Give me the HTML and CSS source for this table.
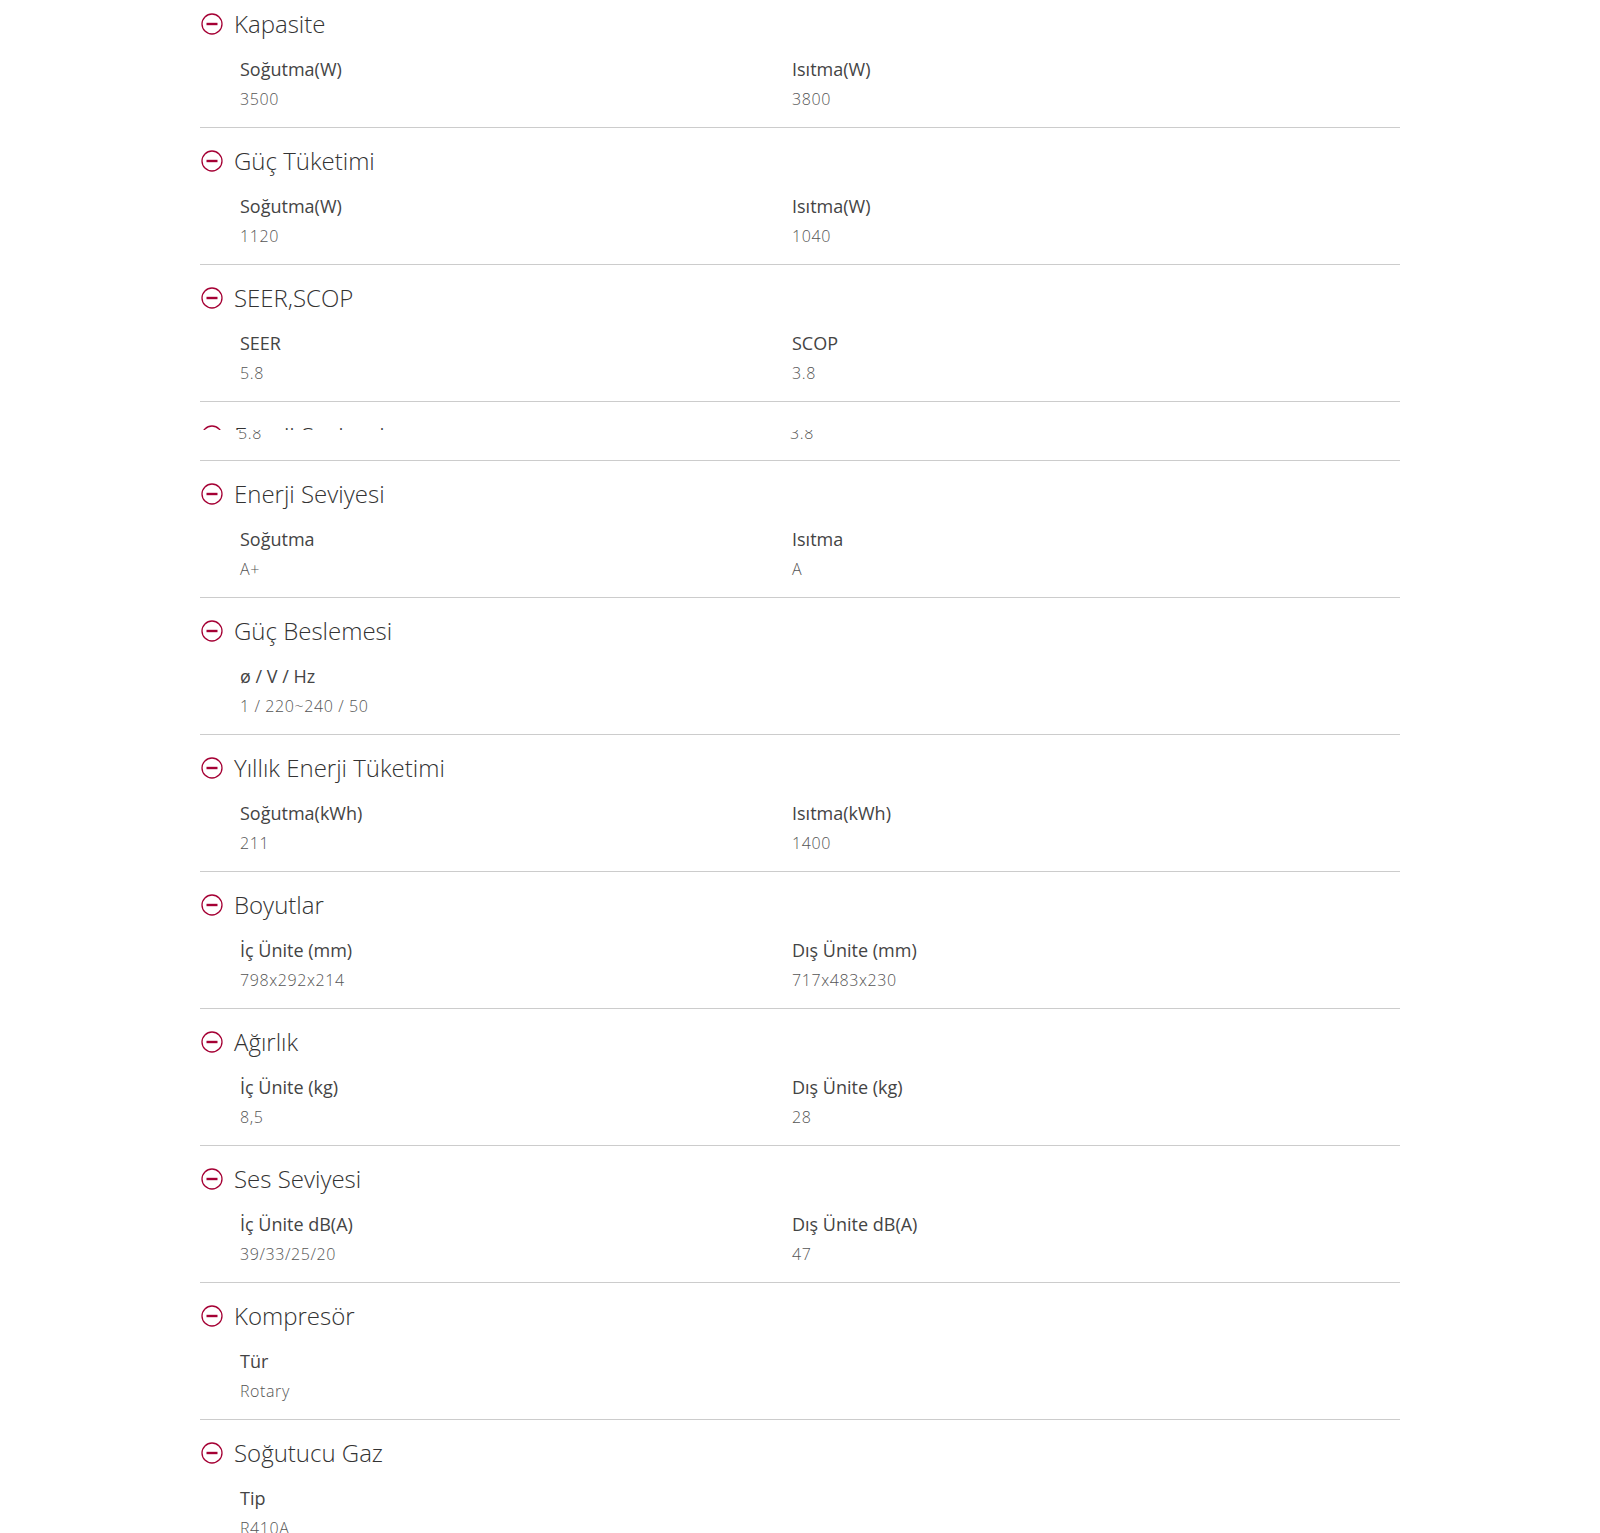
FILE: index.html
```html
<!DOCTYPE html>
<html lang="tr">

<head>
  <meta charset="UTF-8">
  <meta name="viewport" content="width=device-width, initial-scale=1.0">
  <title>Teknik Özellikler</title>
  <link rel="stylesheet" href="styles.css">
</head>

<body>
  <div class="specs">

    <div class="spec">
      <div class="spec-title">
        <svg class="spec-icon" viewBox="0 0 22 22"><circle cx="11" cy="11" r="10" /><line x1="5.5" y1="11" x2="16.5" y2="11" /></svg>
        Kapasite
      </div>
      <div class="spec-list">
        <div class="spec-item"><div class="spec-label">Soğutma(W)</div><div class="spec-value">3500</div></div>
        <div class="spec-item"><div class="spec-label">Isıtma(W)</div><div class="spec-value">3800</div></div>
      </div>
    </div>

    <div class="spec">
      <div class="spec-title">
        <svg class="spec-icon" viewBox="0 0 22 22"><circle cx="11" cy="11" r="10" /><line x1="5.5" y1="11" x2="16.5" y2="11" /></svg>
        Güç Tüketimi
      </div>
      <div class="spec-list">
        <div class="spec-item"><div class="spec-label">Soğutma(W)</div><div class="spec-value">1120</div></div>
        <div class="spec-item"><div class="spec-label">Isıtma(W)</div><div class="spec-value">1040</div></div>
      </div>
    </div>

    <div class="spec">
      <div class="spec-title">
        <svg class="spec-icon" viewBox="0 0 22 22"><circle cx="11" cy="11" r="10" /><line x1="5.5" y1="11" x2="16.5" y2="11" /></svg>
        SEER,SCOP
      </div>
      <div class="spec-list">
        <div class="spec-item"><div class="spec-label">SEER</div><div class="spec-value">5.8</div></div>
        <div class="spec-item"><div class="spec-label">SCOP</div><div class="spec-value">3.8</div></div>
      </div>
    </div>

    <!-- kapanırken yakalanan satır -->
    <div class="spec spec-ghost">
      <div class="ghost-top">
        <div class="spec-title">
          <svg class="spec-icon" viewBox="0 0 22 22"><circle cx="11" cy="11" r="10" /><line x1="5.5" y1="11" x2="16.5" y2="11" /></svg>
          Enerji Seviyesi
        </div>
      </div>
      <div class="ghost-bottom">
        <div class="spec-list ghost-values">
          <div class="spec-value">5.8</div>
          <div class="spec-value">3.8</div>
        </div>
      </div>
    </div>

    <div class="spec">
      <div class="spec-title">
        <svg class="spec-icon" viewBox="0 0 22 22"><circle cx="11" cy="11" r="10" /><line x1="5.5" y1="11" x2="16.5" y2="11" /></svg>
        Enerji Seviyesi
      </div>
      <div class="spec-list">
        <div class="spec-item"><div class="spec-label">Soğutma</div><div class="spec-value">A+</div></div>
        <div class="spec-item"><div class="spec-label">Isıtma</div><div class="spec-value">A</div></div>
      </div>
    </div>

    <div class="spec">
      <div class="spec-title">
        <svg class="spec-icon" viewBox="0 0 22 22"><circle cx="11" cy="11" r="10" /><line x1="5.5" y1="11" x2="16.5" y2="11" /></svg>
        Güç Beslemesi
      </div>
      <div class="spec-list">
        <div class="spec-item"><div class="spec-label">ø / V / Hz</div><div class="spec-value">1 / 220~240 / 50</div></div>
      </div>
    </div>

    <div class="spec">
      <div class="spec-title">
        <svg class="spec-icon" viewBox="0 0 22 22"><circle cx="11" cy="11" r="10" /><line x1="5.5" y1="11" x2="16.5" y2="11" /></svg>
        Yıllık Enerji Tüketimi
      </div>
      <div class="spec-list">
        <div class="spec-item"><div class="spec-label">Soğutma(kWh)</div><div class="spec-value">211</div></div>
        <div class="spec-item"><div class="spec-label">Isıtma(kWh)</div><div class="spec-value">1400</div></div>
      </div>
    </div>

    <div class="spec">
      <div class="spec-title">
        <svg class="spec-icon" viewBox="0 0 22 22"><circle cx="11" cy="11" r="10" /><line x1="5.5" y1="11" x2="16.5" y2="11" /></svg>
        Boyutlar
      </div>
      <div class="spec-list">
        <div class="spec-item"><div class="spec-label">İç Ünite (mm)</div><div class="spec-value">798x292x214</div></div>
        <div class="spec-item"><div class="spec-label">Dış Ünite (mm)</div><div class="spec-value">717x483x230</div></div>
      </div>
    </div>

    <div class="spec">
      <div class="spec-title">
        <svg class="spec-icon" viewBox="0 0 22 22"><circle cx="11" cy="11" r="10" /><line x1="5.5" y1="11" x2="16.5" y2="11" /></svg>
        Ağırlık
      </div>
      <div class="spec-list">
        <div class="spec-item"><div class="spec-label">İç Ünite (kg)</div><div class="spec-value">8,5</div></div>
        <div class="spec-item"><div class="spec-label">Dış Ünite (kg)</div><div class="spec-value">28</div></div>
      </div>
    </div>

    <div class="spec">
      <div class="spec-title">
        <svg class="spec-icon" viewBox="0 0 22 22"><circle cx="11" cy="11" r="10" /><line x1="5.5" y1="11" x2="16.5" y2="11" /></svg>
        Ses Seviyesi
      </div>
      <div class="spec-list">
        <div class="spec-item"><div class="spec-label">İç Ünite dB(A)</div><div class="spec-value">39/33/25/20</div></div>
        <div class="spec-item"><div class="spec-label">Dış Ünite dB(A)</div><div class="spec-value">47</div></div>
      </div>
    </div>

    <div class="spec">
      <div class="spec-title">
        <svg class="spec-icon" viewBox="0 0 22 22"><circle cx="11" cy="11" r="10" /><line x1="5.5" y1="11" x2="16.5" y2="11" /></svg>
        Kompresör
      </div>
      <div class="spec-list">
        <div class="spec-item"><div class="spec-label">Tür</div><div class="spec-value">Rotary</div></div>
      </div>
    </div>

    <div class="spec">
      <div class="spec-title">
        <svg class="spec-icon" viewBox="0 0 22 22"><circle cx="11" cy="11" r="10" /><line x1="5.5" y1="11" x2="16.5" y2="11" /></svg>
        Soğutucu Gaz
      </div>
      <div class="spec-list">
        <div class="spec-item"><div class="spec-label">Tip</div><div class="spec-value">R410A</div></div>
      </div>
    </div>

  </div>
</body>

</html>
```

FILE: styles.css
```css
* {
  margin: 0;
  padding: 0;
  box-sizing: border-box;
}

body {
  font-family: "Open Sans", "Liberation Sans", sans-serif;
  background: #ffffff;
  color: #333;
}

.specs {
  width: 1200px;
  margin: -9px auto 0;
}

.spec {
  padding: 17px 0 15px;
  border-bottom: 1px solid #cccccc;
}

.spec .spec-title {
  display: flex;
  align-items: center;
  gap: 11px;
  padding-left: 1px;
  font-size: 24px;
  font-weight: 300;
  line-height: 32px;
  color: #333;
}

.spec-icon {
  width: 22px;
  height: 22px;
  flex: none;
}

.spec-icon circle {
  fill: none;
  stroke: #a50034;
  stroke-width: 1.3;
}

.spec-icon line {
  stroke: #a50034;
  stroke-width: 2.4;
}

.spec .spec-list {
  display: grid;
  grid-template-columns: 552px 1fr;
  padding-left: 40px;
  margin-top: 16px;
}

.spec .spec-label {
  font-size: 18px;
  font-weight: 400;
  line-height: 26px;
  color: #444;
}

.spec .spec-value {
  margin-top: 4px;
  font-size: 16px;
  font-weight: 300;
  line-height: 26px;
  letter-spacing: 0.6px;
  color: #555;
}

/* 4. satir: yarim kalmis kayan bolum */
.spec-ghost {
  padding: 18px 0 21px;
}

.spec-ghost .ghost-top {
  height: 10px;
  overflow: hidden;
}

.spec-ghost .ghost-bottom {
  height: 9px;
  overflow: hidden;
}

.spec-ghost .ghost-values {
  margin-top: -10px;
  padding-left: 38px;
}

.spec-ghost .ghost-values .spec-value {
  margin-top: 0;
}
```
